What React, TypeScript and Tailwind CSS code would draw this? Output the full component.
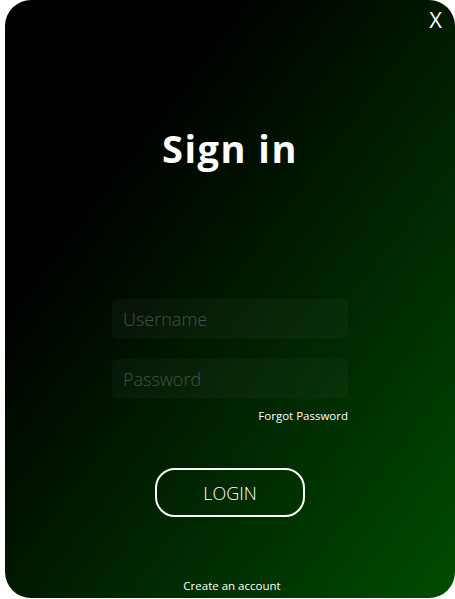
import React from "react";

export default function App() {
  return (
    <div className="w-[455px] h-[599px] bg-white pl-[5px]" style={{ fontFamily: '"Open Sans", "Noto Sans", sans-serif' }}>
      <div className="relative w-[450px] h-[598px] rounded-[26px] bg-[linear-gradient(to_bottom_right,#000000_25%,#004c00_100%)] flex flex-col items-center overflow-hidden">
        <div className="absolute right-[13px] top-[6px] text-white text-[22px] leading-[26px]">X</div>
        <h1 className="mt-[125px] text-white font-bold text-[38px] leading-[46px] tracking-[1.5px]">Sign in</h1>
        <input
          placeholder="Username"
          className="mt-[128px] w-[236px] h-[40px] rounded-[5px] bg-[#ffffff07] pl-[11px] text-[18px] font-light text-white placeholder:text-[#465046] outline-none"
        />
        <input
          placeholder="Password"
          type="password"
          className="mt-[20px] w-[236px] h-[40px] rounded-[5px] bg-[#ffffff07] pl-[11px] text-[18px] font-light text-white placeholder:text-[#465046] outline-none"
        />
        <div className="w-[236px] flex justify-end mt-[9px]">
          <span className="text-white text-[11.5px] leading-[16px]">Forgot Password</span>
        </div>
        <button className="mt-[44px] w-[150px] h-[49px] rounded-[20px] border-2 border-white text-white text-[18px] font-light leading-[24px]">
          LOGIN
        </button>
        <div className="mt-[61px] text-white text-[11.5px] leading-[16px] ml-[4px]">Create an account</div>
      </div>
    </div>
  );
}
